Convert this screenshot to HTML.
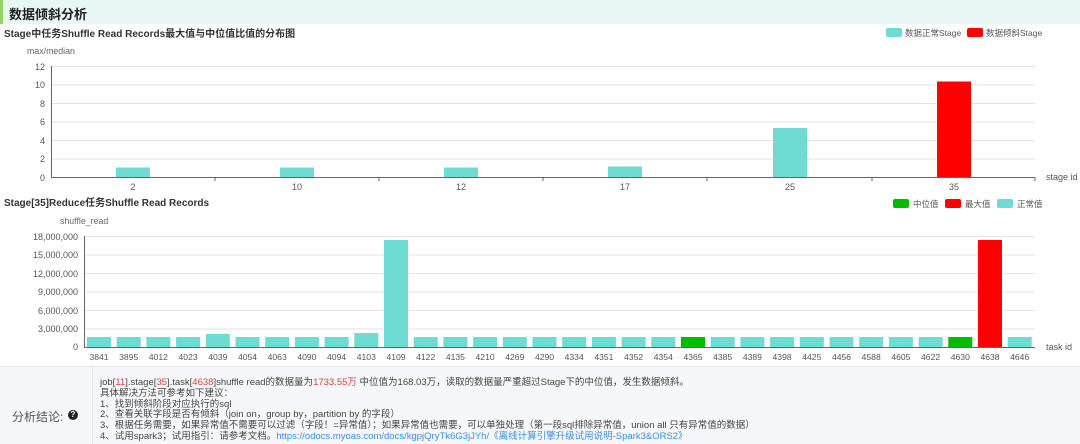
<!DOCTYPE html>
<html><head><meta charset="utf-8"><style>
body{margin:0;width:1080px;height:443px;overflow:hidden;background:#fff;font-family:"Liberation Sans","Noto Sans CJK SC",sans-serif;position:relative}
.hdr{position:absolute;left:0;top:0;width:1080px;height:24px;background:#e8f7f6;border-left:3px solid #8fd36a;box-sizing:border-box}
.hdr span{position:absolute;left:6px;top:4px;font-size:13px;font-weight:bold;color:#222}
svg{position:absolute;left:0;top:0}
svg text{font-family:"Liberation Sans","Noto Sans CJK SC",sans-serif}
.foot{position:absolute;left:0;top:366px;width:1080px;height:77px;background:#f5f7fa;border-top:1px solid #e4e7ed}
.lc{position:absolute;left:0;top:0;width:92px;height:77px;border-right:1px solid #e4e7ed}
.lc span{position:absolute;left:12px;top:41px;font-size:12px;color:#555}
.q{position:absolute;left:68px;top:43px;width:10px;height:10px;border-radius:50%;background:#222;color:#fff;font-size:8px;font-weight:bold;text-align:center;line-height:10px}
.txt{position:absolute;left:100px;top:11px;font-size:9.5px;line-height:10.8px;color:#444;white-space:nowrap}
.r{color:#e04040}.b{color:#3a8ee6}
</style></head><body>
<div class="hdr"><span>数据倾斜分析</span></div>
<svg width="1080" height="366" viewBox="0 0 1080 366">
<text x="4" y="37" font-size="10" font-weight="bold" fill="#333">Stage中任务Shuffle Read Records最大值与中位值比值的分布图</text>
<rect x="886" y="28" width="16" height="9" rx="2" fill="#6fdcd4"/><text x="905" y="36" font-size="8.5" fill="#555">数据正常Stage</text>
<rect x="967" y="28" width="16" height="9" rx="2" fill="#f00"/><text x="986" y="36" font-size="8.5" fill="#555">数据倾斜Stage</text>
<text x="27" y="54" font-size="8.8" fill="#666">max/median</text>
<g stroke="#e3e3e3" stroke-width="1">
<line x1="51" y1="66.5" x2="1035" y2="66.5"/><line x1="51" y1="85" x2="1035" y2="85"/><line x1="51" y1="103.5" x2="1035" y2="103.5"/><line x1="51" y1="122" x2="1035" y2="122"/><line x1="51" y1="140.5" x2="1035" y2="140.5"/><line x1="51" y1="159" x2="1035" y2="159"/></g>
<g font-size="9" fill="#555" text-anchor="end">
<text x="45" y="70">12</text><text x="45" y="88">10</text><text x="45" y="107">8</text><text x="45" y="125">6</text><text x="45" y="144">4</text><text x="45" y="162">2</text><text x="45" y="181">0</text></g>
<g fill="#6fdcd4"><rect x="116" y="167.5" width="34" height="9.5"/><rect x="280" y="167.5" width="34" height="9.5"/><rect x="444" y="167.5" width="34" height="9.5"/><rect x="608" y="166.5" width="34" height="10.5"/><rect x="773" y="128" width="34" height="49"/></g>
<rect x="937" y="81.5" width="34" height="95.5" fill="#f00"/>
<line x1="51.5" y1="66" x2="51.5" y2="177" stroke="#666"/><line x1="51" y1="177.5" x2="1035" y2="177.5" stroke="#666"/>
<g stroke="#666"><line x1="215" y1="177" x2="215" y2="181"/><line x1="379" y1="177" x2="379" y2="181"/><line x1="543" y1="177" x2="543" y2="181"/><line x1="707" y1="177" x2="707" y2="181"/><line x1="872" y1="177" x2="872" y2="181"/><line x1="1035" y1="177" x2="1035" y2="181"/></g>
<g font-size="9" fill="#555" text-anchor="middle"><text x="133" y="190">2</text><text x="297" y="190">10</text><text x="461" y="190">12</text><text x="625" y="190">17</text><text x="790" y="190">25</text><text x="954" y="190">35</text></g>
<text x="1046" y="180" font-size="9" fill="#555">stage id</text>

<text x="4" y="206" font-size="10" font-weight="bold" fill="#333">Stage[35]Reduce任务Shuffle Read Records</text>
<rect x="893" y="199" width="16" height="9" rx="2" fill="#0b0"/><text x="913" y="207" font-size="8.5" fill="#555">中位值</text>
<rect x="945" y="199" width="16" height="9" rx="2" fill="#f00"/><text x="965" y="207" font-size="8.5" fill="#555">最大值</text>
<rect x="997" y="199" width="16" height="9" rx="2" fill="#6fdcd4"/><text x="1017" y="207" font-size="8.5" fill="#555">正常值</text>
<text x="60" y="224" font-size="8.8" fill="#666">shuffle_read</text>
<g stroke="#e3e3e3"><line x1="84" y1="236.5" x2="1035" y2="236.5"/><line x1="84" y1="255" x2="1035" y2="255"/><line x1="84" y1="273.5" x2="1035" y2="273.5"/><line x1="84" y1="292" x2="1035" y2="292"/><line x1="84" y1="310.5" x2="1035" y2="310.5"/><line x1="84" y1="329" x2="1035" y2="329"/></g>
<g font-size="9" fill="#555" text-anchor="end"><text x="78" y="240">18,000,000</text><text x="78" y="258">15,000,000</text><text x="78" y="277">12,000,000</text><text x="78" y="295">9,000,000</text><text x="78" y="314">6,000,000</text><text x="78" y="332">3,000,000</text><text x="78" y="350">0</text></g>
<g fill="#6fdcd4">
<rect x="87" y="337" width="24" height="10"/><rect x="116.7" y="337" width="24" height="10"/><rect x="146.4" y="337" width="24" height="10"/><rect x="176.1" y="337" width="24" height="10"/><rect x="205.8" y="334" width="24" height="13"/><rect x="235.5" y="337" width="24" height="10"/><rect x="265.2" y="337" width="24" height="10"/><rect x="294.9" y="337" width="24" height="10"/><rect x="324.6" y="337" width="24" height="10"/><rect x="354.3" y="333" width="24" height="14"/><rect x="384" y="240" width="24" height="107"/><rect x="413.7" y="337" width="24" height="10"/><rect x="443.4" y="337" width="24" height="10"/><rect x="473.1" y="337" width="24" height="10"/><rect x="502.8" y="337" width="24" height="10"/><rect x="532.5" y="337" width="24" height="10"/><rect x="562.2" y="337" width="24" height="10"/><rect x="591.9" y="337" width="24" height="10"/><rect x="621.6" y="337" width="24" height="10"/><rect x="651.3" y="337" width="24" height="10"/><rect x="710.7" y="337" width="24" height="10"/><rect x="740.4" y="337" width="24" height="10"/><rect x="770.1" y="337" width="24" height="10"/><rect x="799.8" y="337" width="24" height="10"/><rect x="829.5" y="337" width="24" height="10"/><rect x="859.2" y="337" width="24" height="10"/><rect x="888.9" y="337" width="24" height="10"/><rect x="918.6" y="337" width="24" height="10"/><rect x="1007.7" y="337" width="24" height="10"/></g>
<rect x="681" y="337" width="24" height="10" fill="#0b0"/><rect x="948.3" y="337" width="24" height="10" fill="#0b0"/>
<rect x="978" y="240" width="24" height="107" fill="#f00"/>
<line x1="84.5" y1="236" x2="84.5" y2="347" stroke="#666"/><line x1="84" y1="347.5" x2="1035" y2="347.5" stroke="#666"/>
<g font-size="8.6" fill="#555" text-anchor="middle">
<text x="99" y="360">3841</text><text x="128.7" y="360">3895</text><text x="158.4" y="360">4012</text><text x="188.1" y="360">4023</text><text x="217.8" y="360">4039</text><text x="247.5" y="360">4054</text><text x="277.2" y="360">4063</text><text x="306.9" y="360">4090</text><text x="336.6" y="360">4094</text><text x="366.3" y="360">4103</text><text x="396" y="360">4109</text><text x="425.7" y="360">4122</text><text x="455.4" y="360">4135</text><text x="485.1" y="360">4210</text><text x="514.8" y="360">4269</text><text x="544.5" y="360">4290</text><text x="574.2" y="360">4334</text><text x="603.9" y="360">4351</text><text x="633.6" y="360">4352</text><text x="663.3" y="360">4354</text><text x="693" y="360">4365</text><text x="722.7" y="360">4385</text><text x="752.4" y="360">4389</text><text x="782.1" y="360">4398</text><text x="811.8" y="360">4425</text><text x="841.5" y="360">4456</text><text x="871.2" y="360">4588</text><text x="900.9" y="360">4605</text><text x="930.6" y="360">4622</text><text x="960.3" y="360">4630</text><text x="990" y="360">4638</text><text x="1019.7" y="360">4646</text></g>
<text x="1046" y="350" font-size="9" fill="#555">task id</text>
</svg>
<div class="foot"><div class="lc"><span>分析结论:</span><div class="q">?</div></div>
<div class="txt">job[<span class="r">11</span>].stage[<span class="r">35</span>].task[<span class="r">4638</span>]shuffle read的数据量为<span class="r">1733.55万</span> 中位值为168.03万，读取的数据量严重超过Stage下的中位值，发生数据倾斜。<br>具体解决方法可参考如下建议：<br>1、找到倾斜阶段对应执行的sql<br>2、查看关联字段是否有倾斜（join on，group by，partition by 的字段）<br>3、根据任务需要，如果异常值不需要可以过滤（字段！=异常值）；如果异常值也需要，可以单独处理（第一段sql排除异常值，union all 只有异常值的数据）<br>4、试用spark3；试用指引：请参考文档。<span class="b">https://odocs.myoas.com/docs/kgpjQryTk6G3jJYh/《离线计算引擎升级试用说明-Spark3&amp;ORS2》</span></div>
</div>
</body></html>
